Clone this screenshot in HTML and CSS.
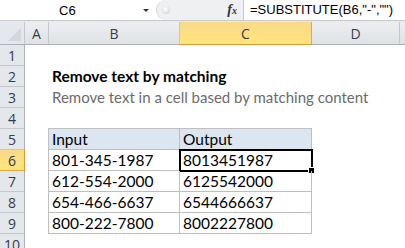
FILE: index.html
```html
<!DOCTYPE html>
<html>
<head>
<meta charset="utf-8">
<link rel="stylesheet" href="styles.css">
</head>
<body>
<div class="fbar">
  <div class="namebox"><span class="ref">C6</span><span class="arrow"></span></div>
  <div class="splitter"><span class="knob"></span></div>
  <div class="fx">f<sub>x</sub></div>
  <div class="formula">=SUBSTITUTE(B6,"-","")</div>
</div>
<div class="gap"></div>
<div class="sheet">
  <div class="corner"><span class="tri"></span></div>
  <div class="ch">A</div>
  <div class="ch">B</div>
  <div class="ch sel">C</div>
  <div class="ch">D</div>
  <div class="ch last"></div>

  <div class="rh">1</div><div class="c"></div><div class="c"></div><div class="c"></div><div class="c"></div><div class="c"></div>
  <div class="rh">2</div><div class="c"></div><div class="c title">Remove text by matching</div><div class="c"></div><div class="c"></div><div class="c"></div>
  <div class="rh">3</div><div class="c"></div><div class="c sub">Remove text in a cell based by matching content</div><div class="c"></div><div class="c"></div><div class="c"></div>
  <div class="rh">4</div><div class="c"></div><div class="c"></div><div class="c"></div><div class="c"></div><div class="c"></div>
  <div class="rh">5</div><div class="c"></div><div class="c t th tl">Input</div><div class="c t th">Output</div><div class="c"></div><div class="c"></div>
  <div class="rh sel">6</div><div class="c"></div><div class="c t tl">801-345-1987</div><div class="c t active">8013451987<span class="selbox"></span><span class="handle"></span></div><div class="c"></div><div class="c"></div>
  <div class="rh">7</div><div class="c"></div><div class="c t tl">612-554-2000</div><div class="c t">6125542000</div><div class="c"></div><div class="c"></div>
  <div class="rh">8</div><div class="c"></div><div class="c t tl">654-466-6637</div><div class="c t">6544666637</div><div class="c"></div><div class="c"></div>
  <div class="rh">9</div><div class="c"></div><div class="c t tl">800-222-7800</div><div class="c t">8002227800</div><div class="c"></div><div class="c"></div>
  <div class="rh">10</div><div class="c"></div><div class="c"></div><div class="c"></div><div class="c"></div><div class="c"></div>
</div>
</body>
</html>
```
FILE: styles.css
```css
html, body {
  margin: 0;
  padding: 0;
  background: #ffffff;
  overflow: hidden;
  width: 405px;
  height: 248px;
}
body {
  font-family: "Lato", "Open Sans", sans-serif;
}
.fbar {
  display: flex;
  height: 20px;
  border-bottom: 1px solid #c6c9cd;
  background: #ffffff;
}
.namebox {
  width: 152px;
  display: flex;
  align-items: center;
  position: relative;
}
.ref {
  margin-left: 59px;
  font-size: 13px;
  color: #000;
  font-family: "Liberation Sans", sans-serif;
}
.arrow {
  margin-left: auto;
  margin-right: 3px;
  width: 0;
  height: 0;
  border-left: 3px solid transparent;
  border-right: 3px solid transparent;
  border-top: 3px solid #333;
}
.splitter {
  width: 24px;
  background: #eef0f2;
  border-left: 1px solid #d0d3d8;
  border-radius: 10px 0 0 10px;
  display: flex;
  align-items: center;
  justify-content: center;
  margin-left: 4px;
}
.knob {
  width: 8px;
  height: 8px;
  border-radius: 50%;
  background: radial-gradient(circle at 40% 35%, #ffffff, #c9ccd1);
  margin-right: 6px;
}
.fx {
  width: 63px;
  background: #eef0f2;
  font-family: "Liberation Serif", serif;
  font-style: italic;
  font-weight: bold;
  font-size: 14px;
  color: #333;
  text-align: right;
  padding-right: 6px;
  box-sizing: border-box;
  line-height: 20px;
  border-right: 1px solid #c6c9cd;
}
.fx sub {
  font-size: 10px;
  vertical-align: 0;
}
.formula {
  flex: 1;
  min-width: 0;
  padding-left: 6px;
  font-size: 13px;
  line-height: 20px;
  font-family: "Liberation Sans", sans-serif;
  color: #000;
  white-space: nowrap;
  overflow: hidden;
}
.gap {
  height: 1px;
  background: #e9ebee;
}
.sheet {
  display: grid;
  grid-template-columns: 25px 24px 131px 132px 88px 5px;
  grid-template-rows: 23px repeat(10, 21px);
}
.corner {
  background: #e4e7eb;
  border-right: 1px solid #c3c6cb;
  border-bottom: 1px solid #abb0b6;
  position: relative;
}
.tri {
  position: absolute;
  right: 3px;
  bottom: 3px;
  width: 0;
  height: 0;
  border-left: 13px solid transparent;
  border-bottom: 13px solid #d3d6da;
}
.ch {
  background: linear-gradient(#eceef1, #dfe2e6);
  border-right: 1px solid #c3c6cb;
  border-bottom: 1px solid #abb0b6;
  font-size: 14px;
  color: #333d4a;
  display: flex;
  align-items: center;
  justify-content: center;
  font-family: "Open Sans", sans-serif;
}
.ch.last { border-right: none; }
.ch.sel, .rh.sel {
  background: linear-gradient(#f9d98b, #ffe47b);
  border-color: #e3a93b;
}
.ch.sel { border-bottom: 1px solid #d99a2b; }
.rh {
  background: #e4e7eb;
  border-right: 1px solid #abb0b6;
  border-bottom: 1px solid #c3c6cb;
  font-size: 14px;
  color: #333d4a;
  display: flex;
  align-items: center;
  justify-content: center;
  font-family: "Open Sans", sans-serif;
}
.rh.sel { border-right: 1px solid #d99a2b; }
.c {
  font-size: 15.5px;
  color: #000;
  white-space: nowrap;
  padding-left: 3px;
  line-height: 20px;
  position: relative;
}
.title {
  font-weight: bold;
  overflow: visible;
}
.sub {
  color: #6b6b6b;
  font-size: 15px;
}
.t {
  border-right: 1px solid #bfbfbf;
  border-bottom: 1px solid #bfbfbf;
}
.tl { border-left: 1px solid #bfbfbf; margin-left: -1px; }
.th {
  background: #dce6f1;
  border-top: 1px solid #bfbfbf;
  margin-top: -1px;
}
.selbox {
  position: absolute;
  left: -1px;
  top: -1px;
  right: -2px;
  bottom: -2px;
  border: 2px solid #000;
  pointer-events: none;
}
.handle {
  position: absolute;
  right: -4px;
  bottom: -4px;
  width: 5px;
  height: 5px;
  background: #000;
  border: 1px solid #fff;
}
```
